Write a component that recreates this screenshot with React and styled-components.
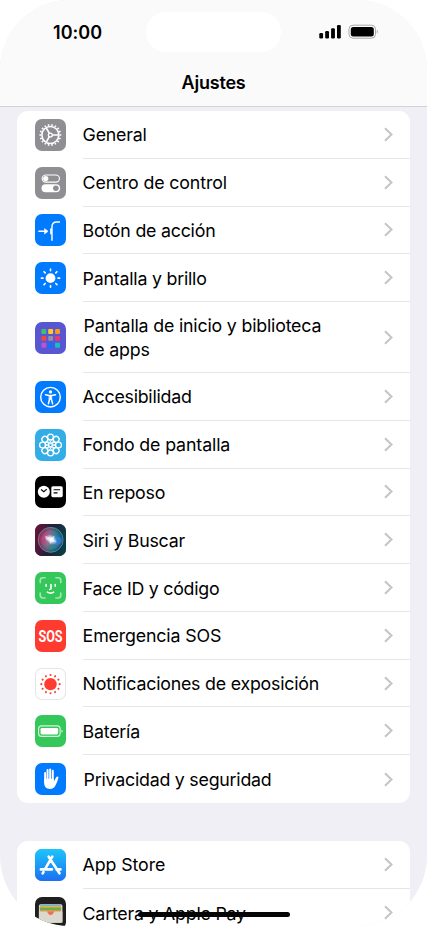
import styled, { createGlobalStyle } from "styled-components";

const GlobalStyle = createGlobalStyle`
  * {
    box-sizing: border-box;
  }

  body {
    margin: 0;
    background: #ffffff;
    overflow: hidden;
  }
`;

const Screen = styled.div`
  position: relative;
  display: flex;
  flex-direction: column;
  width: 427px;
  height: 926px;
  overflow: hidden;
  border-radius: 70px;
  background: #f0eff5;
  color: #000000;
  font-family: Inter, "Liberation Sans", sans-serif;
`;

const Header = styled.header`
  flex: none;
  height: 107px;
  background: #fafafa;
  border-bottom: 1px solid #d2d2d7;
`;

const StatusBar = styled.div`
  display: grid;
  grid-template-columns: 146px 135px 146px;
  height: 64px;
  align-items: center;
`;

const Clock = styled.span`
  padding-left: 53px;
  font-size: 18px;
  font-weight: 600;
  letter-spacing: 0.05px;
`;

const Island = styled.div`
  height: 40px;
  border-radius: 20px;
  background: #ffffff;
`;

const StatusIcons = styled.svg`
  width: 62px;
  height: 16px;
  margin-left: 37px;
`;

const Title = styled.h1`
  margin: 0;
  padding-top: 1px;
  text-align: center;
  font-size: 18px;
  font-weight: 600;
  line-height: 36px;
  letter-spacing: -0.2px;
`;

const List = styled.main`
  display: flex;
  flex-direction: column;
  gap: 38px;
  padding: 4px 17px 0;
`;

const Group = styled.section`
  flex: none;
  border-radius: 11px;
  background: #ffffff;
  overflow: hidden;
`;

const Row = styled.div`
  display: flex;
  align-items: center;
  height: ${({ $tall }) => ($tall ? "71px" : "47.77px")};
  padding-left: 18px;
`;

const RowIcon = styled.svg`
  flex: none;
  width: 31px;
  height: 32px;
  border-radius: 7px;
  background: ${({ $bg }) => $bg};
  box-shadow: ${({ $outlined }) => ($outlined ? "inset 0 0 0 1px #e6e6e8" : "none")};
`;

const RowBody = styled.div`
  display: flex;
  flex: 1;
  align-items: center;
  justify-content: space-between;
  height: 100%;
  margin-left: 16.6px;
  padding-right: 17.5px;
  border-bottom: ${({ $last }) => ($last ? "none" : "1px solid #e6e6e9")};
`;

const Label = styled.span`
  padding-top: 2px;
  padding-left: ${({ $indent }) => ($indent ? "1px" : "0")};
  font-size: 17.8px;
  line-height: 24px;
  letter-spacing: ${({ $spacing }) => $spacing || "-0.22px"};
  white-space: pre-line;
`;

const Chevron = styled.svg`
  flex: none;
  width: 9px;
  height: 15px;
`;

const HomeIndicator = styled.div`
  position: absolute;
  left: 138px;
  bottom: 9px;
  width: 152px;
  height: 5px;
  border-radius: 3px;
  background: #050505;
`;

const steps = (count) =>
  Array.from({ length: count }, (_, i) => (i * 360) / count);

const GearIcon = () => (
  <g stroke="#fff" fill="none">
    <circle cx="47" cy="47.5" r="26" strokeWidth="5" />
    {steps(18).map((a) => (
      <path key={a} d="M47 19v-5" strokeWidth="5" transform={`rotate(${a + 10} 47 47.5)`} />
    ))}
    <circle cx="47" cy="47.5" r="6" strokeWidth="4" />
    {[0, 120, 240].map((a) => (
      <path key={a} d="M53 47.5h20" strokeWidth="5" transform={`rotate(${a} 47 47.5)`} />
    ))}
  </g>
);

const TogglesIcon = () => (
  <>
    <rect x="22" y="23" width="53" height="22" rx="11" fill="none" stroke="#fff" strokeWidth="3.5" />
    <circle cx="33" cy="34" r="8" fill="#fff" />
    <rect x="20" y="51" width="57" height="25" rx="12.5" fill="#fff" />
    <circle cx="64" cy="63.5" r="8.5" fill="#8e8e93" />
  </>
);

const ActionIcon = () => (
  <g fill="none" stroke="#fff" strokeWidth="4.5" strokeLinecap="round" strokeLinejoin="round">
    <path d="M12 51.5h20" />
    <path d="M30 44l10 7.5-10 7.5z" fill="#fff" strokeWidth="2" />
    <path d="M52 79V38c0-11 5-15 15-15h8" />
    <path d="M49 45v14" strokeWidth="5" />
  </g>
);

const SunIcon = () => (
  <>
    <circle cx="47.5" cy="48" r="15" fill="#fff" />
    {steps(8).map((a) => (
      <path
        key={a}
        d="M47.5 25v-5"
        stroke="#fff"
        strokeWidth="5"
        strokeLinecap="round"
        transform={`rotate(${a} 47.5 48)`}
      />
    ))}
  </>
);

const gridColors = [
  "#3fc06d", "#ffca22", "#fb991f",
  "#f4443f", "#9190a4", "#ee3770",
  "#ae58df", "#0b72fb", "#10c1c9",
];

const AppGridIcon = () =>
  gridColors.map((color, i) => (
    <rect
      key={color}
      x={19.5 + (i % 3) * 21}
      y={20 + Math.floor(i / 3) * 21}
      width="15"
      height="15"
      rx="3"
      fill={color}
    />
  ));

const AccessibilityIcon = () => (
  <g stroke="#fff" fill="none" strokeLinecap="round" strokeLinejoin="round">
    <circle cx="47.5" cy="48" r="30" strokeWidth="4.5" />
    <circle cx="47.5" cy="32" r="5" fill="#fff" stroke="none" />
    <path d="M32 40.500l11 2.5h9l11-2.5" strokeWidth="4.5" />
    <path d="M44 43h7v12h-7z" fill="#fff" strokeWidth="2" />
    <path d="M45 53l-4 15M50 53l4 15" strokeWidth="4.5" />
  </g>
);

const FlowerIcon = () => (
  <g stroke="#fff" fill="none">
    {steps(8).map((a) => (
      <g key={a} transform={`rotate(${a} 47.5 47.5)`}>
        <circle cx="47.5" cy="23" r="9" strokeWidth="4" />
        <path d="M43 31l9 13M52 31l-9 13" strokeWidth="2.5" />
      </g>
    ))}
    <circle cx="47.5" cy="47.5" r="5" strokeWidth="2.5" />
  </g>
);

const StandbyIcon = () => (
  <>
    <circle cx="27" cy="46.5" r="18.5" fill="#fff" />
    <path d="M18.5 40l8.5 6.5 9-8" fill="none" stroke="#000" strokeWidth="3.5" />
    <rect x="50" y="29.5" width="35" height="34" rx="5" fill="#fff" />
    <path d="M57 40.500h20M57 50h12" stroke="#000" strokeWidth="3.5" />
  </>
);

const SiriIcon = () => (
  <>
    <defs>
      <linearGradient id="siriBg" x1="0" y1="0.3" x2="1" y2="0.5">
        <stop offset="0" stopColor="#6b1238" />
        <stop offset="0.5" stopColor="#20203c" />
        <stop offset="1" stopColor="#0a3f45" />
      </linearGradient>
      <linearGradient id="siriOrb" x1="0" y1="0.4" x2="1" y2="0.6">
        <stop offset="0" stopColor="#d92d72" />
        <stop offset="0.4" stopColor="#a06a93" />
        <stop offset="0.65" stopColor="#2f8c9c" />
        <stop offset="1" stopColor="#1668c0" />
      </linearGradient>
      <radialGradient id="siriShade" cx="0.5" cy="0.5" r="0.5">
        <stop offset="0" stopColor="#ffffff" stopOpacity="0.3" />
        <stop offset="0.65" stopColor="#161c30" stopOpacity="0.1" />
        <stop offset="1" stopColor="#161c30" stopOpacity="0.5" />
      </radialGradient>
      <radialGradient id="siriGlow">
        <stop offset="0" stopColor="#ffffff" />
        <stop offset="0.3" stopColor="#f4fbff" stopOpacity="0.9" />
        <stop offset="1" stopColor="#c7e8f4" stopOpacity="0" />
      </radialGradient>
    </defs>
    <rect x="-2" y="-2" width="99" height="99" fill="url(#siriBg)" />
    <circle cx="48" cy="47" r="39" fill="url(#siriOrb)" />
    <circle cx="48" cy="47" r="39" fill="url(#siriShade)" />
    <path d="M17 48c7-17 25-13 35 0s24 12 32-2c-5 22-22 20-34 6S27 39 17 48z" fill="#ff4d8b" opacity="0.4" />
    <path d="M48 48c12-16 28-14 34-2-3 17-20 20-34 2z" fill="#298bea" opacity="0.65" />
    <path d="M20 61c17 20 45 17 59-1-13 9-35 9-59 1z" fill="#1d8d91" opacity="0.5" />
    <circle cx="48" cy="47" r="38" fill="none" stroke="#5bbca8" strokeWidth="2.5" opacity="0.7" />
    <ellipse cx="50" cy="46" rx="20" ry="14" fill="url(#siriGlow)" transform="rotate(35 50 46)" />
    <path d="M31 34l17 7 13-7-4 12 10 8-15-1-6 8-1-11-12-4z" fill="#fff" opacity="0.55" />
  </>
);

const FaceIdIcon = () => (
  <g fill="none" strokeLinecap="round" strokeWidth="5">
    <path
      d="M16 31v-7q0-8 8-8h7M64 16h7q8 0 8 8v7M79 63v7q0 8-8 8h-7M31 78h-7q-8 0-8-8v-7"
      stroke="#a4e5b4"
    />
    <path d="M34 37v5M62 37v5M49 37v12q0 3-4 3M38 60q9.500 6 19 0" stroke="#fff" />
  </g>
);

const SosIcon = () => (
  <text
    transform="translate(47.5 64.5) scale(0.8 1)"
    textAnchor="middle"
    fill="#fff"
    fontFamily="Roboto, sans-serif"
    fontSize="48"
    fontWeight="700"
  >
    SOS
  </text>
);

const ExposureIcon = () => (
  <g fill="#ff3b30">
    <circle cx="47.5" cy="48" r="19" />
    {steps(12).map((a) => (
      <circle key={a} cx="47.5" cy="20" r="3.2" transform={`rotate(${a} 47.5 48)`} />
    ))}
  </g>
);

const BatteryIcon = () => (
  <>
    <rect x="11" y="32" width="66" height="32" rx="9" fill="none" stroke="#d5f3dc" strokeWidth="3.5" />
    <rect x="17" y="38" width="54" height="20" rx="4" fill="#fff" />
    <path d="M81 43q8 5 0 10z" fill="#d5f3dc" />
  </>
);

const HandIcon = () => (
  <>
    <g stroke="#fff" strokeLinecap="round" strokeWidth="6">
      <path d="M31 29v28M38.500 20v32M46.500 18v32M54.500 22v32" />
    </g>
    <path
      d="M28 47h29.500v9l7-13c2-4 7-4 7.500-1-1 7-5 17-9 25-4 8-8 11-17 11-12 0-18-8-18-19z"
      fill="#fff"
    />
  </>
);

const AppStoreIcon = () => (
  <>
    <defs>
      <linearGradient id="storeBg" x1="0" y1="0" x2="0" y2="1">
        <stop offset="0" stopColor="#1cc6fb" />
        <stop offset="1" stopColor="#1d6ff2" />
      </linearGradient>
    </defs>
    <rect x="-2" y="-2" width="99" height="99" fill="url(#storeBg)" />
    <g stroke="#fff" strokeWidth="8" strokeLinecap="round">
      <path d="M53 22L32 58M42 22l33 51M18 61h34M66 61h12M26 69l-2.500 4" />
    </g>
  </>
);

const WalletIcon = () => (
  <>
    <rect x="12" y="21" width="72" height="56" rx="5" fill="#dbd9ce" />
    <rect x="15" y="23" width="65" height="14" rx="3" fill="#6cb5dc" />
    <rect x="15" y="27" width="65" height="10" rx="2" fill="#efb83c" />
    <rect x="15" y="31" width="65" height="11" rx="2" fill="#71ad48" />
    <rect x="15" y="39" width="65" height="8" rx="2" fill="#e9965c" />
    <path d="M12 43h23c5 0 5 8 13 8s8-8 13-8h23v34H12z" fill="#dbd9ce" />
    <path d="M36 44h24c-4 2-5 10-12 10s-8-8-12-10z" fill="#ee6e57" />
  </>
);

const groups = [
  [
    { label: "General", bg: "#8e8e93", Icon: GearIcon },
    { label: "Centro de control", bg: "#8e8e93", Icon: TogglesIcon, spacing: "-0.13px" },
    { label: "Botón de acción", bg: "#007aff", Icon: ActionIcon },
    { label: "Pantalla y brillo", bg: "#007aff", Icon: SunIcon },
    {
      label: "Pantalla de inicio y biblioteca\nde apps",
      bg: "#5856d0",
      Icon: AppGridIcon,
      tall: true,
      indent: true,
      spacing: "-0.19px",
    },
    { label: "Accesibilidad", bg: "#007aff", Icon: AccessibilityIcon, spacing: "-0.25px" },
    { label: "Fondo de pantalla", bg: "#32ade6", Icon: FlowerIcon, spacing: "-0.13px" },
    { label: "En reposo", bg: "#000000", Icon: StandbyIcon },
    { label: "Siri y Buscar", bg: "#20203c", Icon: SiriIcon, spacing: "-0.25px" },
    { label: "Face ID y código", bg: "#34c759", Icon: FaceIdIcon, spacing: "-0.25px" },
    { label: "Emergencia SOS", bg: "#ff3b30", Icon: SosIcon, spacing: "-0.15px" },
    {
      label: "Notificaciones de exposición",
      bg: "#ffffff",
      Icon: ExposureIcon,
      outlined: true,
    },
    { label: "Batería", bg: "#34c759", Icon: BatteryIcon },
    {
      label: "Privacidad y seguridad",
      bg: "#007aff",
      Icon: HandIcon,
      indent: true,
      spacing: "-0.23px",
    },
  ],
  [
    { label: "App Store", bg: "#1d9bf6", Icon: AppStoreIcon, spacing: "-0.1px" },
    { label: "Cartera y Apple Pay", bg: "#1f1f1f", Icon: WalletIcon },
  ],
];

const SettingsRow = ({ item, last }) => {
  const { label, bg, Icon, tall, outlined, indent, spacing } = item;

  return (
    <Row $tall={tall}>
      <RowIcon viewBox="0 0 95 95" $bg={bg} $outlined={outlined}>
        <Icon />
      </RowIcon>
      <RowBody $last={last}>
        <Label $spacing={spacing} $indent={indent}>
          {label}
        </Label>
        <Chevron viewBox="0 0 9 15">
          <path d="M1 1.200l6.500 6.300L1 13.800" fill="none" stroke="#c4c4c7" strokeWidth="2" />
        </Chevron>
      </RowBody>
    </Row>
  );
};

const App = () => (
  <>
    <GlobalStyle />
    <Screen>
      <Header>
        <StatusBar>
          <Clock>10:00</Clock>
          <Island />
          <StatusIcons viewBox="0 0 62 16">
            <rect x="1.3" y="9" width="3.8" height="5.5" rx="1.2" />
            <rect x="7.2" y="7" width="3.8" height="7.5" rx="1.2" />
            <rect x="13.1" y="4.2" width="3.8" height="10.3" rx="1.2" />
            <rect x="19" y="1" width="3.8" height="13.5" rx="1.2" />
            <rect x="31" y="1.2" width="26.5" height="13" rx="4" fill="none" stroke="#a9a9a9" />
            <rect x="32.8" y="2.9" width="23" height="9.7" rx="2.5" />
            <path d="M58.8 5.500q2 2.200 0 4.400z" fill="#a9a9a9" />
          </StatusIcons>
        </StatusBar>
        <Title>Ajustes</Title>
      </Header>
      <List>
        {groups.map((items, i) => (
          <Group key={i}>
            {items.map((item, j) => (
              <SettingsRow key={item.label} item={item} last={j === items.length - 1} />
            ))}
          </Group>
        ))}
      </List>
      <HomeIndicator />
    </Screen>
  </>
);

export default App;
